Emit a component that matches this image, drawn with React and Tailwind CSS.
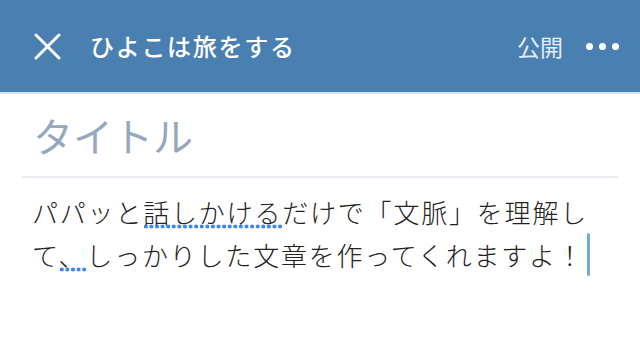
export default function App() {
  const jp = { fontFamily: '"Noto Sans CJK JP", "Noto Sans", sans-serif' };
  const dots =
    "bg-[radial-gradient(circle,#3f86ef_1.8px,transparent_2.2px)] bg-[length:5.6px_7px] bg-repeat-x bg-[position:0_100%]";
  return (
    <div className="w-[640px] h-[355px] bg-white overflow-hidden" style={jp}>
      <header className="h-[92px] bg-[#4a7fb2] flex items-center pl-[34px] pr-[21px] text-white">
        <svg width="27" height="27" viewBox="0 0 27 27" className="shrink-0">
          <path d="M2 2 L25 25 M25 2 L2 25" stroke="white" strokeWidth="3" strokeLinecap="round" />
        </svg>
        <h1 className="ml-[29px] text-[24px] font-medium tracking-[1.7px] leading-none">ひよこは旅をする</h1>
        <div className="ml-auto text-[23px] leading-none text-[#e4ecf5]">公開</div>
        <div className="ml-[23px] flex gap-[6px] items-center">
          <span className="w-[7px] h-[7px] rounded-full bg-white" />
          <span className="w-[7px] h-[7px] rounded-full bg-white" />
          <span className="w-[7px] h-[7px] rounded-full bg-white" />
        </div>
      </header>
      <div className="h-[2px] bg-[#d9e4ef]" />
      <div className="mx-[22px]">
        <div className="h-[84px] flex items-center pl-[11px] border-b-2 border-[#e9edf3]">
          <span className="text-[40px] leading-none text-[#94a9be]">タイトル</span>
        </div>
        <div className="pt-[12px] pl-[10px] text-[26px] leading-[43px] tracking-[1.8px] text-[#222] font-light">
          <div>
            パパッと<span className={dots}>話しかける</span>だけで「文脈」を理解し
          </div>
          <div className="flex items-center">
            <span>
              て<span className={dots}>、</span>しっかりした文章を作ってくれますよ！
            </span>
            <span className="inline-block w-[3px] h-[43px] bg-[#74a9d8] rounded-sm ml-[2px]" />
          </div>
        </div>
      </div>
    </div>
  );
}
